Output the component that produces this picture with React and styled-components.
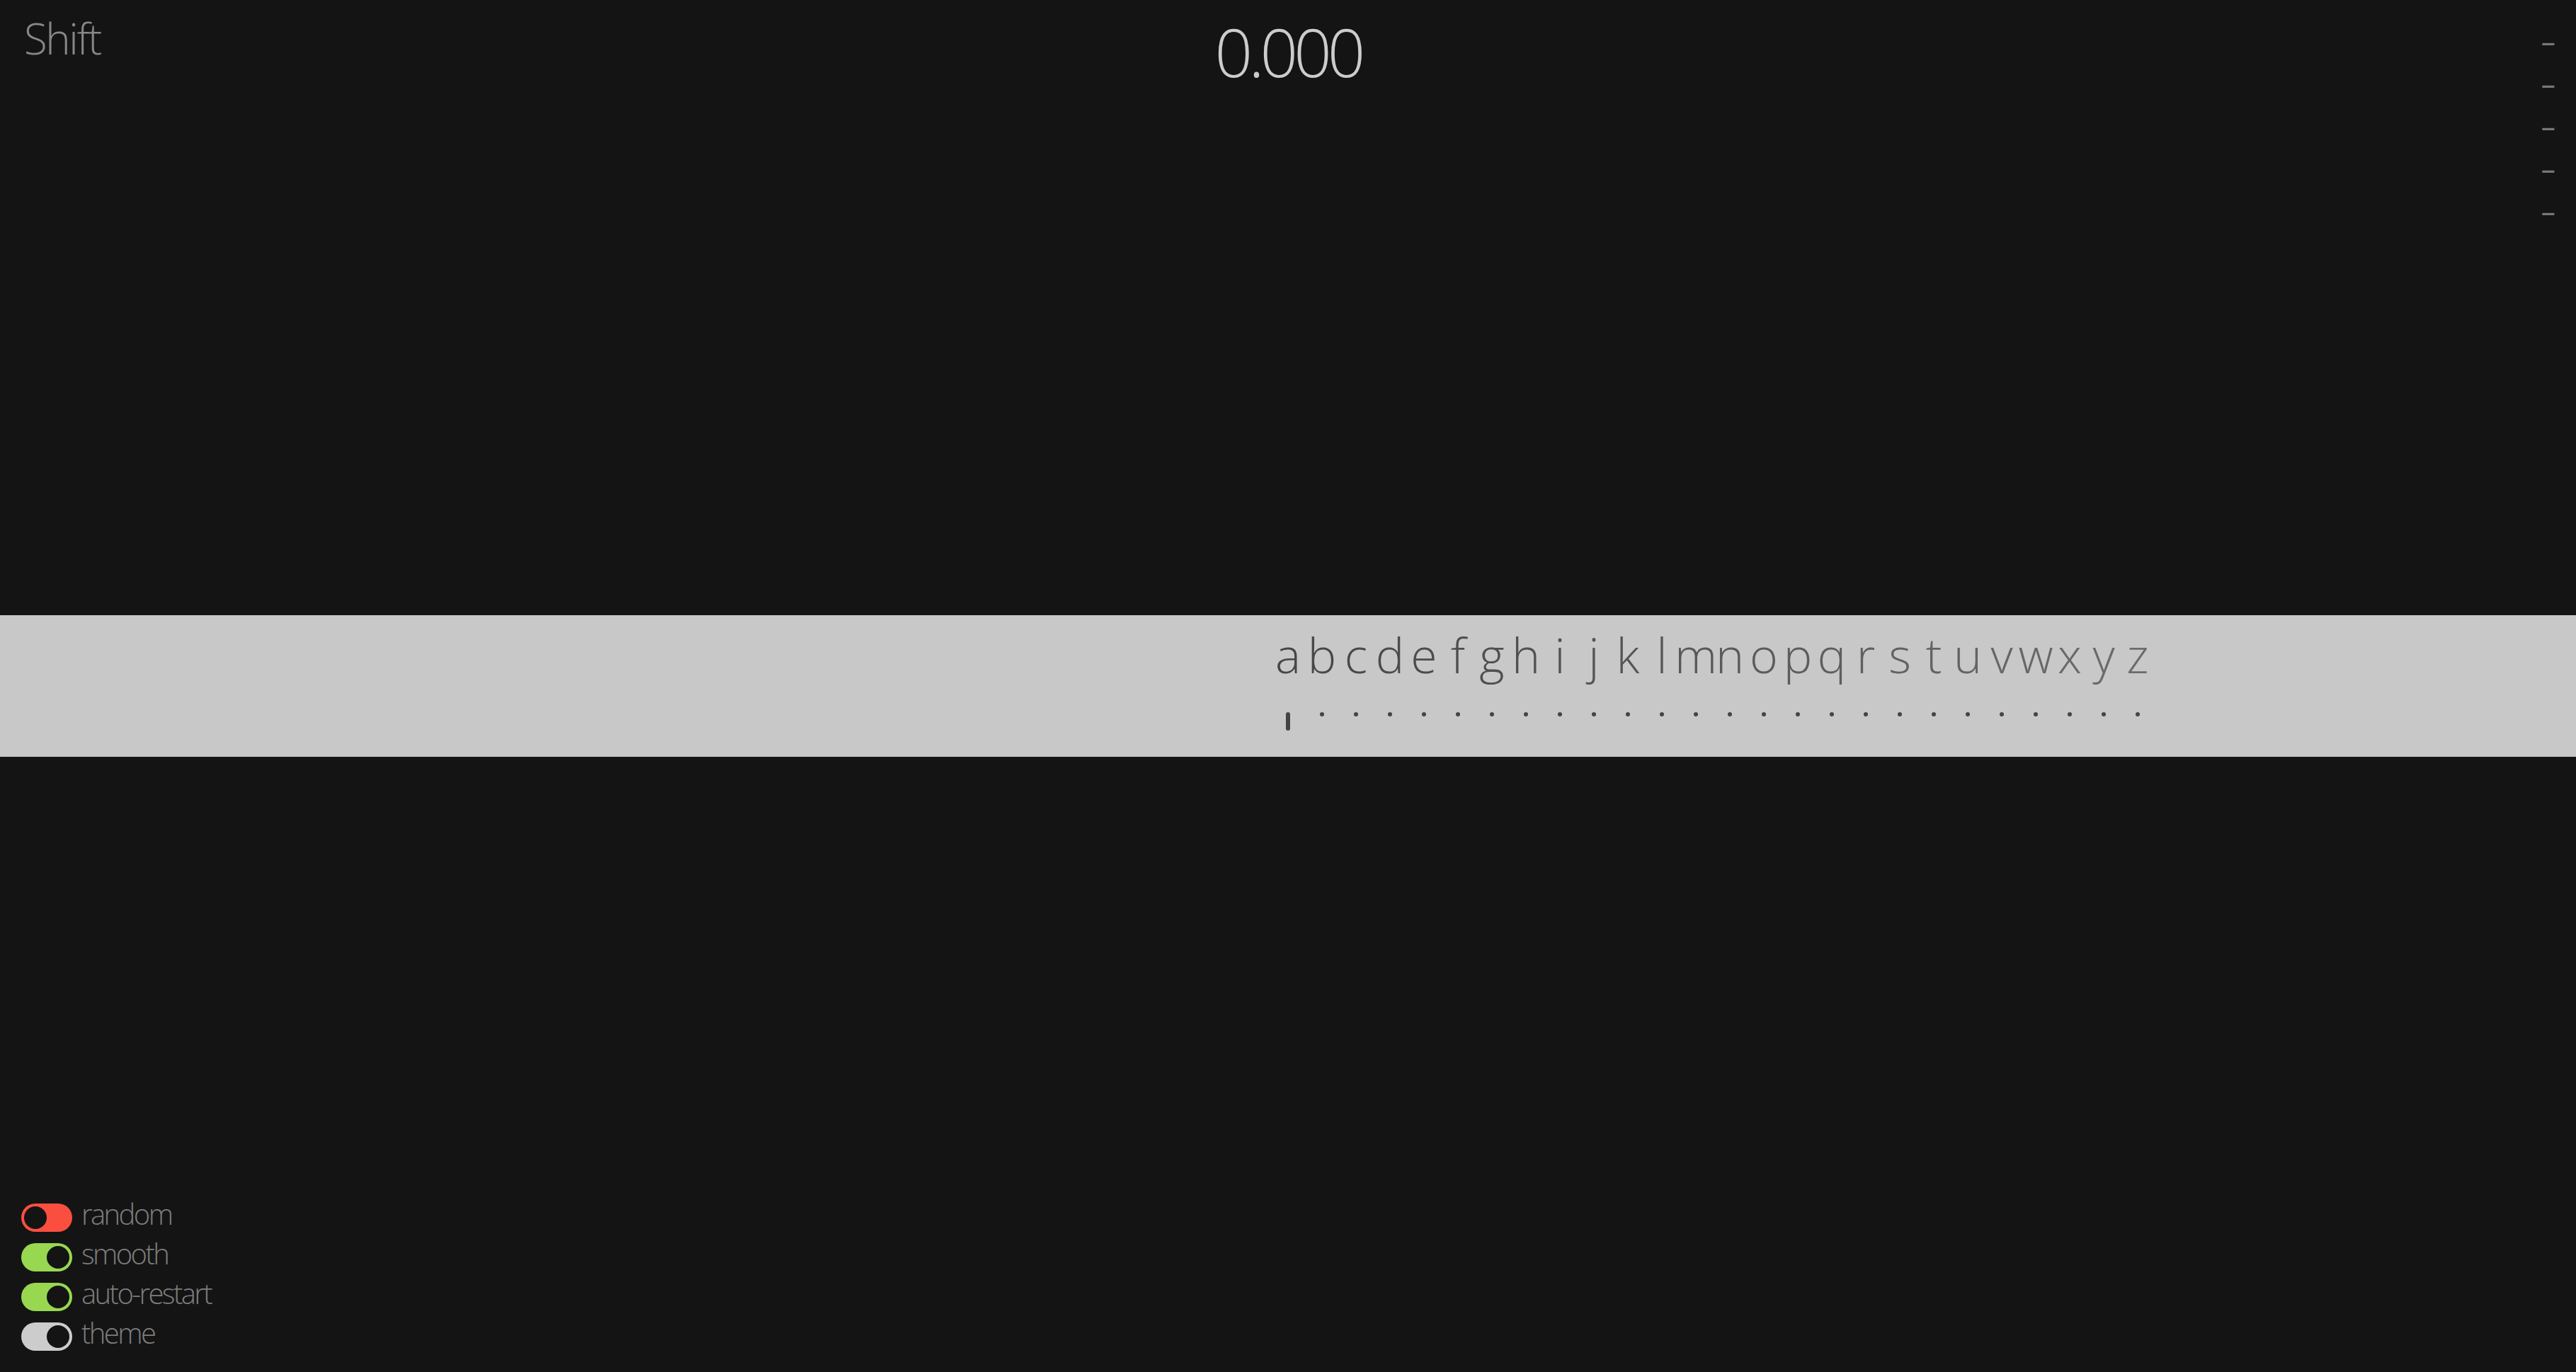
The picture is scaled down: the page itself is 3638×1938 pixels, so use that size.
import styled, { createGlobalStyle } from "styled-components";

const GlobalStyle = createGlobalStyle`
  html, body {
    margin: 0;
    padding: 0;
    background: #141414;
  }
  body {
    font-family: "Open Sans", "Noto Sans", sans-serif;
    font-weight: 300;
  }
`;

const letters = "abcdefghijklmnopqrstuvwxyz".split("");

const options = [
  { label: "random", on: false, color: "#fa4f3f" },
  { label: "smooth", on: true, color: "#98d850" },
  { label: "auto-restart", on: true, color: "#98d850" },
  { label: "theme", on: true, color: "#cccccc" },
];

function Toggle({ on, color }) {
  return (
    <Track $color={color} $on={on}>
      <Knob />
    </Track>
  );
}

export default function App() {
  return (
    <>
      <GlobalStyle />
      <Page>
        <Header>
          <Title>Shift</Title>
          <Value>0.000</Value>
          <Slots>
            {[0, 1, 2, 3, 4].map((i) => (
              <Slot key={i}>-</Slot>
            ))}
          </Slots>
        </Header>
        <Band>
          <Strip>
            <LetterRow>
              {letters.map((l, i) => (
                <Letter key={l} $index={i}>
                  {l}
                </Letter>
              ))}
            </LetterRow>
            <MarkRow>
              {letters.map((l, i) => (
                <Cell key={l}>{i === 0 ? <Cursor /> : <Dot />}</Cell>
              ))}
            </MarkRow>
          </Strip>
        </Band>
        <Footer>
          <Options>
            {options.map((o) => (
              <Option key={o.label}>
                <Toggle on={o.on} color={o.color} />
                <Label>{o.label}</Label>
              </Option>
            ))}
          </Options>
        </Footer>
      </Page>
    </>
  );
}

const Page = styled.div`
  height: 100vh;
  display: grid;
  grid-template-rows: 1fr 200px 1fr;
  overflow: hidden;
`;

const Header = styled.header`
  display: grid;
  grid-template-columns: 1fr auto 1fr;
  align-items: start;
`;

const Title = styled.div`
  justify-self: start;
  padding: 24px 0 0 34px;
  font-size: 60px;
  line-height: 1;
  letter-spacing: -2.4px;
  color: #888888;
`;

const Value = styled.div`
  padding-top: 26px;
  font-size: 94px;
  line-height: 1;
  letter-spacing: -6px;
  color: #cccccc;
`;

const Slots = styled.div`
  justify-self: end;
  display: flex;
  flex-direction: column;
  padding: 27px 28px 0 0;
`;

const Slot = styled.div`
  font-size: 44px;
  line-height: 60px;
  font-weight: 400;
  color: #777777;
  transform: scaleX(1.6);
  transform-origin: right center;
`;

const Band = styled.section`
  background: #c8c8c8;
  overflow: hidden;
`;

const Strip = styled.div`
  margin-left: calc(50% - 24px);
  display: flex;
  flex-direction: column;
  padding-top: 22px;
`;

const LetterRow = styled.div`
  display: flex;
`;

const Letter = styled.span`
  flex: 0 0 48px;
  min-width: 0;
  display: flex;
  justify-content: center;
  font-size: 68px;
  line-height: 1;
  color: ${(p) => {
    const v = Math.round(0x46 + (0x6c - 0x46) * (p.$index / 25));
    return `rgb(${v}, ${v}, ${v})`;
  }};
`;

const MarkRow = styled.div`
  display: flex;
  margin-top: 47px;
`;

const Cell = styled.div`
  flex: 0 0 48px;
  display: flex;
  justify-content: center;
`;

const Dot = styled.span`
  width: 6px;
  height: 6px;
  border-radius: 50%;
  background: #444444;
`;

const Cursor = styled.span`
  width: 6px;
  height: 26px;
  border-radius: 3px;
  background: #444444;
`;

const Footer = styled.footer`
  display: flex;
  align-items: flex-end;
  padding: 0 0 30px 30px;
`;

const Options = styled.div`
  display: flex;
  flex-direction: column;
  gap: 16px;
`;

const Option = styled.div`
  display: flex;
  align-items: center;
  gap: 13px;
`;

const Track = styled.div`
  box-sizing: border-box;
  width: 72px;
  height: 40px;
  padding: 4px;
  border-radius: 20px;
  background: ${(p) => p.$color};
  display: flex;
  justify-content: ${(p) => (p.$on ? "flex-end" : "flex-start")};
`;

const Knob = styled.span`
  width: 32px;
  height: 32px;
  border-radius: 50%;
  background: #141414;
`;

const Label = styled.span`
  margin-top: -10px;
  font-size: 40px;
  line-height: 1;
  letter-spacing: -2.6px;
  color: #7d7d7d;
`;
